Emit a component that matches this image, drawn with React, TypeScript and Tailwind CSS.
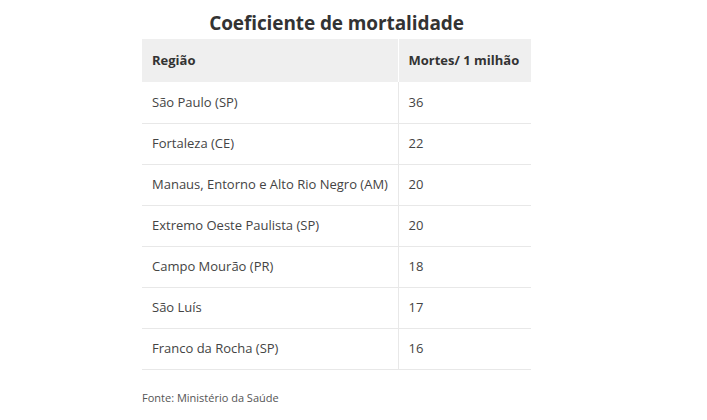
const ROWS: [string, number][] = [
  ['São Paulo (SP)', 36],
  ['Fortaleza (CE)', 22],
  ['Manaus, Entorno e Alto Rio Negro (AM)', 20],
  ['Extremo Oeste Paulista (SP)', 20],
  ['Campo Mourão (PR)', 18],
  ['São Luís', 17],
  ['Franco da Rocha (SP)', 16],
];

export default function App() {
  return (
    <div className="w-[707px] h-[420px] bg-white font-['Open_Sans',sans-serif] pl-[142px] pt-[8px]">
      <div className="w-[389px]">
        <h1 className="text-center text-[19px] font-bold leading-[31px] text-[#333] tracking-[-0.1px]">
          Coeficiente de mortalidade
        </h1>
        <table className="w-full table-fixed border-collapse text-[13px] whitespace-nowrap">
          <thead>
            <tr className="bg-[#efefef] h-[43px] text-[#333]">
              <th className="w-[256px] border-r border-white px-[10px] text-left font-bold">Região</th>
              <th className="px-[10px] text-left font-bold">Mortes/ 1 milhão</th>
            </tr>
          </thead>
          <tbody>
            {ROWS.map(([r, n]) => (
              <tr key={r} className="h-[41px] border-b border-[#e8e8e8] text-[#444]">
                <td className="border-r border-[#e8e8e8] px-[10px]">{r}</td>
                <td className="px-[10px]">{n}</td>
              </tr>
            ))}
          </tbody>
        </table>
        <p className="mt-[20px] text-[11px] text-[#555]">Fonte: Ministério da Saúde</p>
      </div>
    </div>
  );
}
